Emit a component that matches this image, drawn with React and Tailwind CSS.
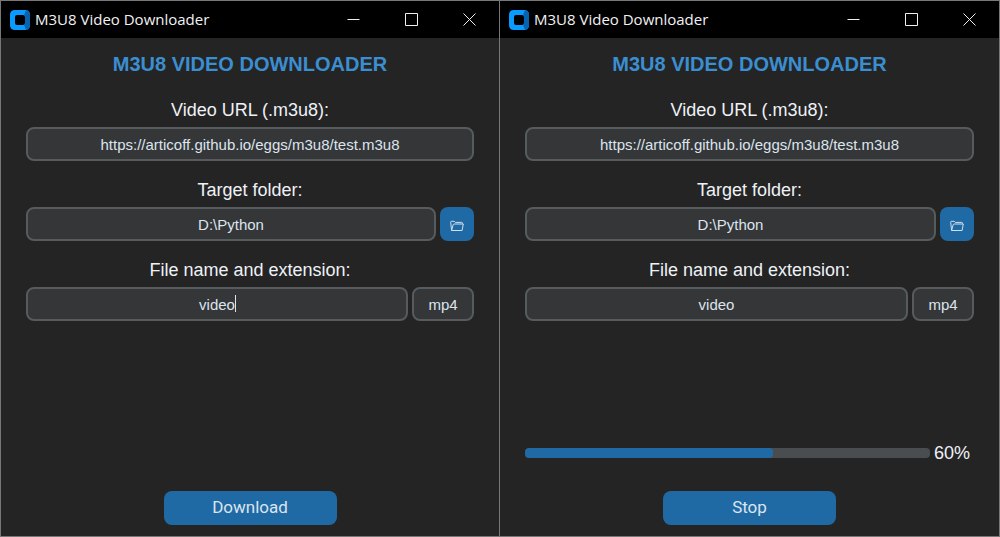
import { useId, useState } from "react";

const fieldClass =
  "h-[34px] w-full min-w-0 rounded-lg border-2 border-[#565b5e] bg-[#343638] px-2 text-center text-[15px] text-[#dce4ee] outline-none";

function Logo() {
  return (
    <svg viewBox="0 0 20 20" className="size-5 shrink-0" aria-hidden="true">
      <path
        fill="#0a9bff"
        fillRule="evenodd"
        d="M5 0H15Q20 0 20 5V15Q20 20 15 20H5Q0 20 0 15V5Q0 0 5 0ZM7 5Q5 5 5 7V13Q5 15 7 15H13Q15 15 15 13V7Q15 5 13 5Z"
      />
      <path
        fill="#0563b0"
        d="M16 0.2Q20 0.8 20 5V15Q20 19.2 16 19.8L14 14.7Q15 14.2 15 13V7Q15 5.8 14 5.3Z"
      />
    </svg>
  );
}

function FolderIcon() {
  return (
    <svg
      viewBox="0 0 14 12"
      className="h-3 w-3.5"
      fill="none"
      stroke="#d3dfec"
      strokeWidth="1"
      strokeLinejoin="round"
      aria-hidden="true"
    >
      <path d="M1.6 10.5L0.7 2.3Q0.6 1.3 1.5 1.3H4.2L5.4 2.4H11.6Q12.5 2.4 12.5 3.3V4" />
      <path d="M1.6 10.5L3.1 4.9Q3.3 4 4.2 4H13.3L12.1 10.5Z" />
    </svg>
  );
}

function WindowControl({ label, d }) {
  return (
    <button type="button" aria-label={label} className="flex h-full w-[58px] items-center justify-center">
      <svg viewBox="0 0 13 13" className="size-[13px]" fill="none" stroke="#f0f0f0" aria-hidden="true">
        <path d={d} />
      </svg>
    </button>
  );
}

function TitleBar() {
  return (
    <header className="flex h-[37px] items-center bg-black pr-px pl-[9px]">
      <Logo />
      <span className="ml-[5px] grow whitespace-nowrap font-['Open_Sans',sans-serif] text-[15px] text-[#f2f2f2]">
        M3U8 Video Downloader
      </span>
      <WindowControl label="Minimize" d="M0.5 6.5H12.5" />
      <WindowControl label="Maximize" d="M0.5 0.5H12.5V12.5H0.5Z" />
      <WindowControl label="Close" d="M0.5 0.5L12.5 12.5M12.5 0.5L0.5 12.5" />
    </header>
  );
}

function Field({ label, id, children }) {
  return (
    <div>
      <label htmlFor={id} className="block text-center text-[18px] leading-[34px] text-[#eef2f7]">
        {label}
      </label>
      <div className="flex gap-1">{children}</div>
    </div>
  );
}

function ProgressRow({ value }) {
  return (
    <div className="mb-[26px] flex items-center gap-1">
      <div
        role="progressbar"
        aria-label="Download progress"
        aria-valuenow={value}
        aria-valuemin={0}
        aria-valuemax={100}
        className="h-2.5 grow overflow-hidden rounded bg-[#4a4d50]"
      >
        <div className="h-full rounded bg-[#1f6aa5]" style={{ width: `calc(${value}% + 5px)` }} />
      </div>
      <span className="w-10 text-[18px] leading-6 text-[#eef2f7]">{value}%</span>
    </div>
  );
}

function DownloaderWindow({ action, progress, editing, className }) {
  const id = useId();
  const [url, setUrl] = useState("https://articoff.github.io/eggs/m3u8/test.m3u8");
  const [folder, setFolder] = useState("D:\\Python");
  const [name, setName] = useState("video");
  const [extension, setExtension] = useState("mp4");

  return (
    <section className={`flex min-w-0 flex-col border border-[#777777] bg-[#242424] ${className}`}>
      <TitleBar />
      <div className="flex grow flex-col px-[25px] pb-[11px]">
        <h1 className="mb-0.5 text-center text-[20px] leading-[53px] font-bold text-[#3b8ed0]">
          M3U8 VIDEO DOWNLOADER
        </h1>
        <div className="flex flex-col gap-3">
          <Field label="Video URL (.m3u8):" id={`${id}-url`}>
            <input
              id={`${id}-url`}
              className={fieldClass}
              value={url}
              onChange={(e) => setUrl(e.target.value)}
            />
          </Field>
          <Field label="Target folder:" id={`${id}-folder`}>
            <input
              id={`${id}-folder`}
              className={fieldClass}
              value={folder}
              onChange={(e) => setFolder(e.target.value)}
            />
            <button
              type="button"
              aria-label="Browse folders"
              className="flex size-[34px] shrink-0 items-center justify-center rounded-lg bg-[#1f6aa5] pt-1"
            >
              <FolderIcon />
            </button>
          </Field>
          <Field label="File name and extension:" id={`${id}-name`}>
            <div className="relative min-w-0 grow">
              <input
                id={`${id}-name`}
                className={fieldClass}
                value={name}
                onChange={(e) => setName(e.target.value)}
              />
              {editing && (
                <span className="pointer-events-none absolute top-2 left-1/2 ml-[18px] h-[17px] w-px bg-[#dce4ee]" />
              )}
            </div>
            <div className="w-[62px] shrink-0">
              <input
                aria-label="File extension"
                className={fieldClass}
                value={extension}
                onChange={(e) => setExtension(e.target.value)}
              />
            </div>
          </Field>
        </div>
        <div className="mt-auto pt-6">
          {progress !== undefined && <ProgressRow value={progress} />}
          <button
            type="button"
            className="mx-auto block h-[34px] w-[173px] rounded-lg bg-[#1f6aa5] font-['Roboto',sans-serif] text-[17px] text-[#dce4ee]"
          >
            {action}
          </button>
        </div>
      </div>
    </section>
  );
}

export default function App() {
  return (
    <main className="grid min-h-screen grid-cols-2 font-['Liberation_Sans',Arial,sans-serif]">
      <DownloaderWindow action="Download" editing className="" />
      <DownloaderWindow action="Stop" progress={60} className="border-l-0" />
    </main>
  );
}
